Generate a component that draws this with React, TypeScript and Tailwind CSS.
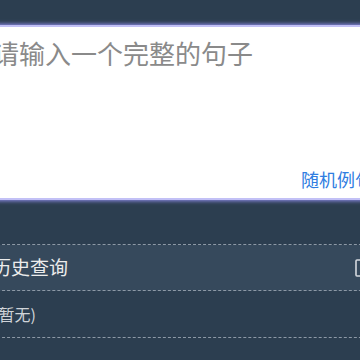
import React, { useState } from 'react';

/**
 * Sentence lookup panel: input box, random example link and history list
 */
export default function App() {
  // State for the sentence being typed
  const [text, setText] = useState('');
  // History of past queries (empty for now)
  const [history] = useState<string[]>([]);

  const font = { fontFamily: '"Noto Sans CJK SC", "Noto Sans", sans-serif' };

  return (
    <div className="w-[360px] h-[360px] overflow-hidden bg-[#2c3e50]" style={font}>
      <div className="-ml-[8px] w-[390px] pt-[25px]">
        {/* Input box */}
        <div className="flex flex-col h-[175px] bg-white border-y-2 border-[#c2c0f6] shadow-[0_0_4px_1px_#8f8ce8]">
          <textarea
            value={text}
            onChange={e => setText(e.target.value)}
            placeholder="请输入一个完整的句子"
            className="flex-1 resize-none outline-none pt-[10px] pl-[1px] text-[26px] leading-[31px] text-[#333] placeholder:text-[#8a8a8a] bg-transparent"
          />
          <div className="flex justify-end pr-[9px] pb-[8px]">
            <a href="#" className="text-[18px] leading-[22px] text-[#2f7de1] whitespace-nowrap">
              随机例句
            </a>
          </div>
        </div>

        {/* History */}
        <div className="mt-[44px] border-t border-dashed border-[#8d99a6]">
          <div className="flex items-center justify-between h-[46px] bg-[#36495c] pl-0 pr-[11px] border-b border-dashed border-[#8d99a6]">
            <span className="text-[19px] text-[#ececec]">历史查询</span>
            <svg width="16" height="18" viewBox="0 0 16 18" fill="none" stroke="#d5d9de" strokeWidth="1.6">
              <rect x="1" y="1" width="14" height="16" rx="1" />
            </svg>
          </div>
          {history.length === 0 && (
            <div className="flex items-center h-[47px] pl-[1px] border-b border-dashed border-[#8d99a6]">
              <span className="text-[16px] text-[#d0d4d9]">(暂无)</span>
            </div>
          )}
        </div>
      </div>
    </div>
  );
}
